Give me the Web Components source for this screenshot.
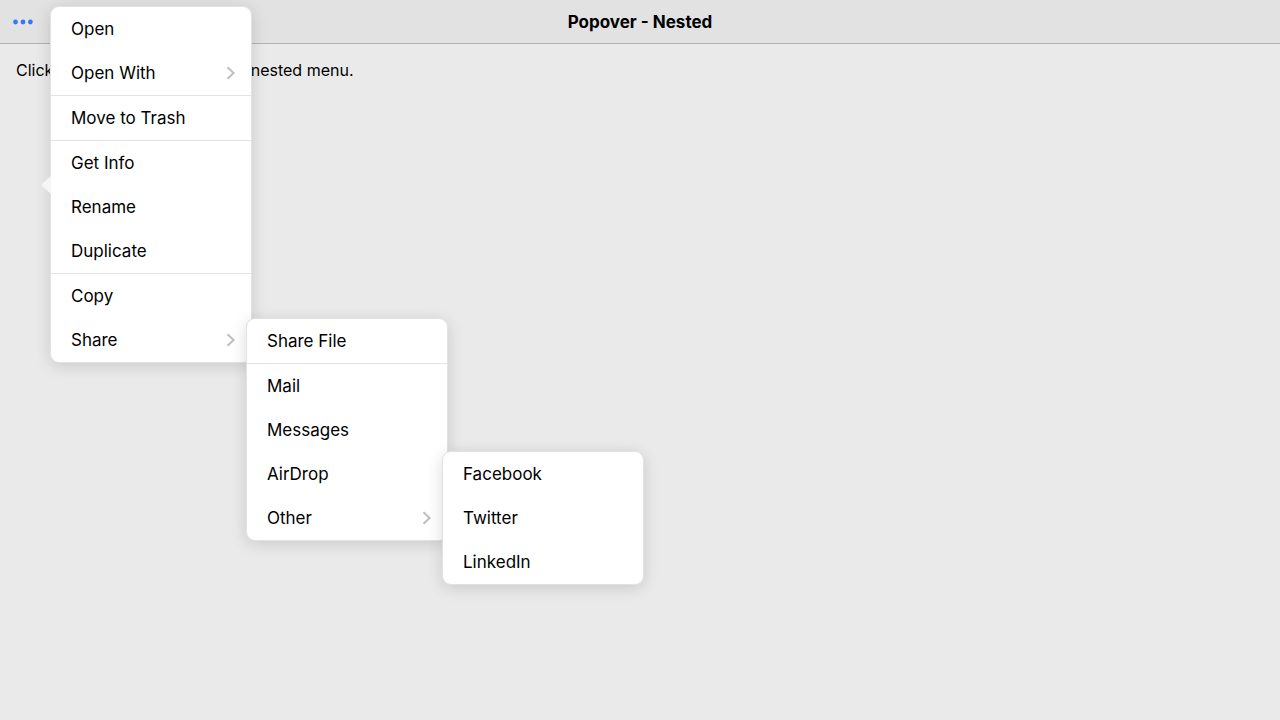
<!DOCTYPE html>
<html lang="en">
<head>
<meta charset="utf-8">
<meta name="viewport" content="width=device-width, initial-scale=1">
<title>Popover - Nested</title>
<style>
  body { margin: 0; min-height: 100vh; background: #eaeaea; color: #000; font-family: Inter, "Liberation Sans", sans-serif; font-size: 16px; }
</style>
</head>
<body>
<nested-page>
  <page-header slot="header">Popover - Nested</page-header>
  <p>Click the dots icon to open the nested menu.</p>
  <popover-menu slot="overlay" label="File actions" arrow>
    <menu-group>
      <menu-item>Open</menu-item>
      <menu-item chevron>Open With</menu-item>
    </menu-group>
    <menu-group>
      <menu-item>Move to Trash</menu-item>
    </menu-group>
    <menu-group>
      <menu-item>Get Info</menu-item>
      <menu-item>Rename</menu-item>
      <menu-item>Duplicate</menu-item>
    </menu-group>
    <menu-group>
      <menu-item>Copy</menu-item>
      <menu-item chevron>Share
        <popover-menu slot="submenu" label="Share">
          <menu-group>
            <menu-item>Share File</menu-item>
          </menu-group>
          <menu-group>
            <menu-item>Mail</menu-item>
            <menu-item>Messages</menu-item>
            <menu-item>AirDrop</menu-item>
            <menu-item chevron class="raised">Other
              <popover-menu slot="submenu" label="Other">
                <menu-group>
                  <menu-item>Facebook</menu-item>
                  <menu-item>Twitter</menu-item>
                  <menu-item>LinkedIn</menu-item>
                </menu-group>
              </popover-menu>
            </menu-item>
          </menu-group>
        </popover-menu>
      </menu-item>
    </menu-group>
  </popover-menu>
</nested-page>

<script>
  const define = (name, html, setup) => {
    const template = document.createElement('template');
    template.innerHTML = html;
    customElements.define(name, class extends HTMLElement {
      constructor() {
        super();
        this.attachShadow({ mode: 'open' }).append(template.content.cloneNode(true));
      }
      connectedCallback() {
        if (setup) setup(this, this.shadowRoot);
      }
    });
  };

  define('nested-page', `
    <style>
      :host { display: flex; flex-direction: column; min-height: 100vh; position: relative; }
      main { flex: 1; padding: 16px; }
      ::slotted(p) { margin: 0; font-size: 16px; line-height: 20px; }
      ::slotted(popover-menu) { position: absolute; left: 50px; top: 6px; }
    </style>
    <slot name="header"></slot>
    <main><slot></slot></main>
    <slot name="overlay"></slot>
  `);

  define('page-header', `
    <style>
      :host { display: block; background: #e2e2e2; border-bottom: 1px solid #b2b2b2; }
      header { display: grid; grid-template-columns: 1fr auto 1fr; align-items: center; height: 43px; }
      h1 { margin: 0; font-size: 17px; line-height: 24px; font-weight: 700; }
      button { justify-self: start; display: flex; padding: 10px; margin: 0; border: 0; background: none; color: #3478f6; }
      svg { width: 26px; height: 24px; fill: currentColor; }
    </style>
    <header>
      <button type="button" aria-label="More">
        <svg viewBox="0 0 26 24" aria-hidden="true"><circle cx="5.5" cy="12" r="2.4"/><circle cx="13" cy="12" r="2.4"/><circle cx="20.4" cy="12" r="2.4"/></svg>
      </button>
      <h1><slot></slot></h1>
    </header>
  `);

  define('popover-menu', `
    <style>
      :host { display: block; box-sizing: border-box; width: 202px; border: 1px solid #e2e2e2; border-radius: 9px; background: #fff; box-shadow: 0 3px 16px rgba(0, 0, 0, 0.14); }
      .arrow { display: none; }
      :host([arrow]) .arrow { display: block; position: absolute; right: 100%; top: 50%; width: 10px; height: 18px; transform: translateY(-50%); fill: #f6f6f6; }
    </style>
    <svg class="arrow" viewBox="0 0 10 18" aria-hidden="true"><path d="M10 0 L1.4 7.4 Q-0.4 9 1.4 10.6 L10 18 Z"/></svg>
    <div role="menu"><slot></slot></div>
  `, (host, root) => root.querySelector('[role=menu]').setAttribute('aria-label', host.getAttribute('label')));

  define('menu-group', `
    <style>
      :host { display: block; }
      :host(:not(:first-child)) { border-top: 1px solid #e3e3e3; }
    </style>
    <div role="group"><slot></slot></div>
  `);

  define('menu-item', `
    <style>
      :host { display: block; position: relative; --submenu-top: 0; }
      :host(.raised) { --submenu-top: -45px; }
      button { display: flex; align-items: center; justify-content: space-between; width: 100%; height: 44px; margin: 0; padding: 0 15px 0 20px; border: 0; background: none; color: #000; font: inherit; font-size: 17px; line-height: 24px; text-align: left; }
      svg { display: none; width: 10px; height: 16px; fill: none; stroke: #bfbfbf; stroke-width: 2; }
      :host([chevron]) svg { display: block; }
      ::slotted(popover-menu) { position: absolute; left: calc(100% - 5px); top: var(--submenu-top); z-index: 1; }
    </style>
    <button type="button" role="menuitem">
      <span><slot></slot></span>
      <svg viewBox="0 0 10 16" aria-hidden="true"><path d="M1.5 2.2 L7.6 8 L1.5 13.8"/></svg>
    </button>
    <slot name="submenu"></slot>
  `, (host, root) => {
    if (host.hasAttribute('chevron')) root.querySelector('button').setAttribute('aria-haspopup', 'menu');
  });
</script>
</body>
</html>
